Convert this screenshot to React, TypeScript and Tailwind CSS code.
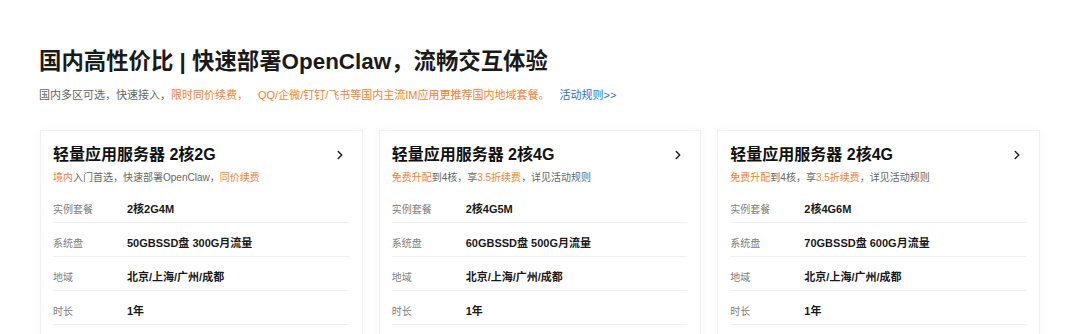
import { ChevronRight } from 'lucide-react';

const font = {
  fontFamily: '"Liberation Sans", "Noto Sans CJK SC", sans-serif',
};

interface Plan {
  title: string;
  desc: { text: string; hot?: boolean }[];
  spec: string;
  disk: string;
}

const plans: Plan[] = [
  {
    title: '轻量应用服务器 2核2G',
    desc: [
      { text: '境内', hot: true },
      { text: '入门首选，快速部署OpenClaw，' },
      { text: '同价续费', hot: true },
    ],
    spec: '2核2G4M',
    disk: '50GBSSD盘 300G月流量',
  },
  {
    title: '轻量应用服务器 2核4G',
    desc: [
      { text: '免费升配', hot: true },
      { text: '到4核，享' },
      { text: '3.5折续费', hot: true },
      { text: '，详见活动规则' },
    ],
    spec: '2核4G5M',
    disk: '60GBSSD盘 500G月流量',
  },
  {
    title: '轻量应用服务器 2核4G',
    desc: [
      { text: '免费升配', hot: true },
      { text: '到4核，享' },
      { text: '3.5折续费', hot: true },
      { text: '，详见活动规则' },
    ],
    spec: '2核4G6M',
    disk: '70GBSSD盘 600G月流量',
  },
];

function PlanCard({ plan }: { plan: Plan }) {
  const rows = [
    ['实例套餐', plan.spec],
    ['系统盘', plan.disk],
    ['地域', '北京/上海/广州/成都'],
    ['时长', '1年'],
  ];
  return (
    <div className="bg-white border border-[#f0f1f3] shadow-[0_0_10px_rgba(0,0,0,0.04)] pl-3 pr-[13px] pt-[13px] pb-4">
      {/* Header */}
      <div className="flex items-center justify-between h-[22px]">
        <span className="text-[16px] font-bold text-[#111] leading-none">{plan.title}</span>
        <ChevronRight size={14} strokeWidth={2.6} className="text-[#222] mr-[2px]" />
      </div>
      <p className="mt-[5px] text-[10px] leading-[14px] text-[#666]">
        {plan.desc.map((d, i) => (
          <span key={i} className={d.hot ? 'text-[#f7812f]' : ''}>
            {d.text}
          </span>
        ))}
      </p>

      {/* Specs */}
      <div className="mt-[4px]">
        {rows.map(([label, value]) => (
          <div
            key={label}
            className="flex items-center h-[34px] pt-[7px] border-b border-[#eef0f2]"
          >
            <span className="w-[74px] text-[10px] text-[#808080]">{label}</span>
            <span className="text-[11px] font-bold text-[#1a1a1a]">{value}</span>
          </div>
        ))}
      </div>
    </div>
  );
}

export default function App() {
  return (
    <div className="w-[1080px] h-[334px] bg-white overflow-hidden" style={font}>
      <div className="w-[1000px] mx-auto pt-[47px]">
        <h1 className="text-[22.4px] leading-[30px] font-bold text-[#1a1a1a] -ml-[1px]">
          国内高性价比 | 快速部署OpenClaw，流畅交互体验
        </h1>
        <p className="mt-[10px] text-[11px] leading-[16px] text-[#666] -ml-[1px]">
          国内多区可选，快速接入，
          <span className="text-[#f7812f]">限时同价续费，</span>
          <span className="text-[#f7812f] ml-[10px]">
            QQ/企微/钉钉/飞书等国内主流IM应用更推荐国内地域套餐。
          </span>
          <span className="text-[#2c6de0] ml-[10px]">活动规则&gt;&gt;</span>
        </p>

        <div className="grid grid-cols-3 gap-4 mt-[27px]">
          {plans.map((p, i) => (
            <PlanCard key={i} plan={p} />
          ))}
        </div>
      </div>
    </div>
  );
}
